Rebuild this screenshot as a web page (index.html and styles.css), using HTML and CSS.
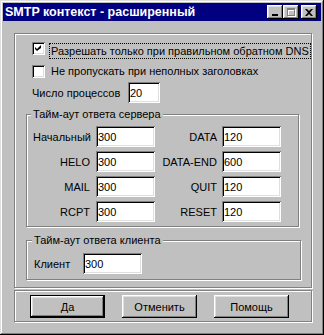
FILE: index.html
```html
<!DOCTYPE html>
<html lang="ru">
<head>
  <meta charset="UTF-8">
  <title>SMTP контекст - расширенный</title>
  <link rel="stylesheet" href="styles.css">
</head>
<body>

  <div class="window">
    <div class="titlebar">
      <span class="title">SMTP контекст - расширенный</span>
      <div class="controls">
        <span class="ctl">
          <svg width="8" height="8" viewBox="0 0 8 8"><rect x="1" y="6" width="6" height="2" fill="#000"/></svg>
        </span>
        <span class="ctl">
          <svg width="10" height="10" viewBox="0 0 10 10">
            <path d="M2 2h8v8H2z M3 4v5h6V4z" fill="#fff" fill-rule="evenodd"/>
            <path d="M1 1h8v8H1z M2 3v5h6V3z" fill="#808080" fill-rule="evenodd"/>
          </svg>
        </span>
        <span class="ctl ctl-close">
          <svg width="8" height="7" viewBox="0 0 8 7"><path d="M0 0h2l2 2 2-2h2L5 3.5 8 7H6L4 5 2 7H0l3-3.5z" fill="#000"/></svg>
        </span>
      </div>
    </div>

    <div class="content">
      <div class="group main">
        <div class="check first">
          <span class="box">
            <svg width="9" height="9" viewBox="0 0 9 9"><path d="M7 1v3l-4 3L1 5V3l2 2z" fill="#000"/></svg>
          </span>
          <span class="focus">Разрешать только при правильном обратном DNS</span>
        </div>
        <div class="check second">
          <span class="box"></span>
          <span class="check-text">Не пропускать при неполных заголовках</span>
        </div>
        <div class="field procs">
          <span class="procs-label">Число процессов</span>
          <input class="edit small" type="text" value="20">
        </div>

        <fieldset class="frame server">
          <legend>Тайм-аут ответа сервера</legend>
          <div class="timeouts">
            <span class="lbl">Начальный</span><input class="edit" type="text" value="300">
            <span class="lbl lbl-right">DATA</span><input class="edit" type="text" value="120">
            <span class="lbl">HELO</span><input class="edit" type="text" value="300">
            <span class="lbl lbl-right">DATA-END</span><input class="edit" type="text" value="600">
            <span class="lbl">MAIL</span><input class="edit" type="text" value="300">
            <span class="lbl lbl-right">QUIT</span><input class="edit" type="text" value="120">
            <span class="lbl">RCPT</span><input class="edit" type="text" value="300">
            <span class="lbl lbl-right">RESET</span><input class="edit" type="text" value="120">
          </div>
        </fieldset>

        <fieldset class="frame client">
          <legend>Тайм-аут ответа клиента</legend>
          <div class="field">
            <span class="client-label">Клиент</span>
            <input class="edit" type="text" value="300">
          </div>
        </fieldset>
      </div>

      <div class="group buttons">
        <button class="btn default">Да</button>
        <button class="btn">Отменить</button>
        <button class="btn">Помощь</button>
      </div>
    </div>
  </div>

</body>
</html>
```

FILE: styles.css
```css
body {
  margin: 0;
  font-family: 'Liberation Sans', Arial, sans-serif;
  font-size: 11px;
  color: #000;
}

.window {
  width: 324px;
  height: 335px;
  box-sizing: border-box;
  padding: 3px;
  background-color: #c0c0c0;
  box-shadow: inset -1px -1px #000, inset 1px 1px #dfdfdf,
              inset -2px -2px #808080, inset 2px 2px #fff;
}

.titlebar {
  height: 18px;
  background-color: #000080;
  color: #fff;
  display: flex;
  align-items: center;
  justify-content: space-between;
  padding: 0 4px 0 2px;
}

.title {
  font-weight: bold;
  font-size: 12.5px;
  white-space: nowrap;
}

.controls {
  display: flex;
}

.ctl {
  width: 16px;
  height: 14px;
  background-color: #c0c0c0;
  display: flex;
  align-items: center;
  justify-content: center;
  box-shadow: inset -1px -1px #000, inset 1px 1px #fff,
              inset -2px -2px #808080, inset 2px 2px #dfdfdf;
}

.ctl-close {
  margin-left: 2px;
}

.content {
  padding: 12px 0 0 11px;
}

/* etched group frame */
.group,
.frame {
  border: 1px solid #808080;
  box-shadow: inset 1px 1px #fff, 1px 1px #fff;
  box-sizing: border-box;
}

.main {
  width: 298px;
  height: 255px;
  padding: 8px 0 0 11px;
}

.check {
  display: flex;
  align-items: flex-start;
  margin-left: 6px;
  white-space: nowrap;
}

.check.second {
  margin-top: 6px;
}

.box {
  flex: none;
  width: 13px;
  height: 13px;
  box-sizing: border-box;
  background-color: #fff;
  display: flex;
  align-items: center;
  justify-content: center;
  box-shadow: inset 1px 1px #808080, inset -1px -1px #fff,
              inset 2px 2px #000, inset -2px -2px #dfdfdf;
}

.focus {
  margin: 1px 0 0 4px;
  padding: 0 1px;
  line-height: 14px;
  border: 1px dotted #000;
}

.check-text {
  margin-left: 6px;
  line-height: 13px;
}

.field {
  display: flex;
  align-items: center;
  white-space: nowrap;
}

.procs {
  margin: 4px 0 0 6px;
}

.procs-label {
  flex: none;
  width: 96px;
}

.edit {
  flex: none;
  width: 59px;
  height: 21px;
  box-sizing: border-box;
  border: 0;
  margin: 0;
  padding: 0 2px;
  background-color: #fff;
  font-family: 'Liberation Sans', Arial, sans-serif;
  font-size: 11px;
  color: #000;
  box-shadow: inset 1px 1px #808080, inset -1px -1px #fff,
              inset 2px 2px #000, inset -2px -2px #dfdfdf;
}

.edit.small {
  width: 32px;
}

.frame {
  margin: 0;
  min-width: 0;
}

.frame legend {
  margin-left: -2px;
  padding: 0 2px;
  line-height: 14px;
  background-color: #c0c0c0;
  white-space: nowrap;
}

.server {
  width: 273px;
  margin-top: 4px;
  padding: 5px 0 4px 6px;
}

.timeouts {
  display: grid;
  grid-template-columns: 63px 59px 67px 59px;
  row-gap: 4px;
  align-items: center;
  white-space: nowrap;
}

.lbl {
  text-align: right;
  padding-right: 6px;
}

.lbl-right {
  padding-right: 5px;
}

.client {
  width: 275px;
  margin-top: 6px;
  padding: 6px 0 5px 7px;
}

.client-label {
  flex: none;
  width: 49px;
}

.buttons {
  width: 298px;
  height: 32px;
  margin-top: 2px;
  padding: 4px 0 0 15px;
  display: flex;
  gap: 17px;
}

.btn {
  width: 75px;
  height: 23px;
  padding: 0;
  border: 0;
  background-color: #c0c0c0;
  font-family: 'Liberation Sans', Arial, sans-serif;
  font-size: 11px;
  color: #000;
  box-shadow: inset -1px -1px #000, inset 1px 1px #fff,
              inset -2px -2px #808080, inset 2px 2px #dfdfdf;
}

.btn.default {
  box-shadow: inset 0 0 0 1px #000, inset -2px -2px #000, inset 2px 2px #fff,
              inset -3px -3px #808080, inset 3px 3px #dfdfdf;
}
```
